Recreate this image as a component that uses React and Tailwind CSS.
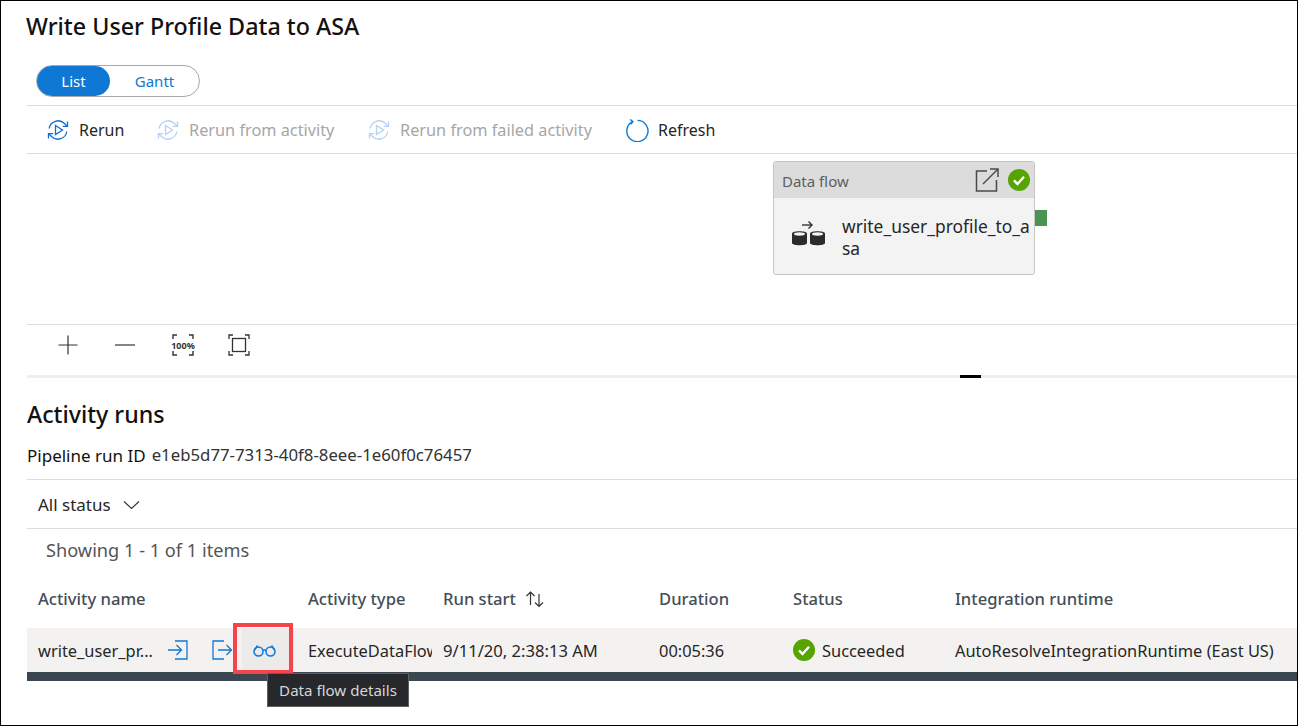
import React from 'react';

const font = { fontFamily: '"Noto Sans", "Open Sans", sans-serif' };

function RerunIcon({ muted }) {
  return (
    <svg width="24" height="24" viewBox="0 0 24 24" fill="none" stroke="#0f6cd8" strokeWidth="1.3" className={muted ? 'opacity-30' : ''}>
      <path d="M3.2 10.5A9 9 0 0 1 18.5 5.5L21 8" />
      <path d="M21.5 3.5V8.3H16.8" />
      <path d="M20.8 13.5A9 9 0 0 1 5.5 18.5L3 16" />
      <path d="M2.5 20.5V15.7H7.2" />
      <path d="M9.5 7.5L16.5 12L9.5 16.5Z" />
    </svg>
  );
}

function RefreshIcon() {
  return (
    <svg width="24" height="24" viewBox="0 0 24 24" fill="none" stroke="#0f7ad8" strokeWidth="1.4">
      <path d="M7.5 3.6A10.6 10.6 0 1 0 12.5 2.4" />
      <path d="M5.6 1.2L8 3.8L5.4 6.2" transform="rotate(-8 7 4)" />
    </svg>
  );
}

function CheckBadge({ size }) {
  return (
    <svg width={size} height={size} viewBox="0 0 22 22">
      <circle cx="11" cy="11" r="11" fill="#57a300" />
      <path d="M6 11.4L9.5 15L16 7.8" fill="none" stroke="#fff" strokeWidth="2.4" />
    </svg>
  );
}

function Tool({ icon, label, muted, className }) {
  return (
    <div className={`flex items-center gap-[9px] ${className}`}>
      {icon}
      <span className={muted ? 'translate-y-[1px] text-[16.3px] text-[#a6a6a6]' : 'text-[#262626]'}>{label}</span>
    </div>
  );
}

export default function App() {
  return (
    <div style={font} className="relative w-[1298px] h-[726px] overflow-hidden border border-black bg-white pl-[26px] text-[16px] text-[#262626]">
      {/* Header */}
      <h1 className="-ml-[1px] h-[64px] pt-[7px] text-[23.3px] leading-[36px] font-medium text-[#111] whitespace-nowrap">Write User Profile Data to ASA</h1>

      <div className="h-[40px]">
        <div className="ml-[9px] flex h-[32px] w-[164px] items-center rounded-full border border-[#a8a8a8] text-[15px]">
          <div className="flex h-[30px] w-[73px] items-center justify-center rounded-full bg-[#0f78d4] text-white">List</div>
          <div className="flex-1 text-center text-[#0f78d4]">Gantt</div>
        </div>
      </div>

      {/* Toolbar */}
      <div className="flex h-[49px] items-center border-y border-[#dedede] pl-[19px] whitespace-nowrap text-[16px]">
        <Tool className="w-[110px]" icon={<RerunIcon />} label="Rerun" />
        <Tool className="w-[211px]" muted icon={<RerunIcon muted />} label="Rerun from activity" />
        <Tool className="w-[258px]" muted icon={<RerunIcon muted />} label="Rerun from failed activity" />
        <Tool icon={<RefreshIcon />} label="Refresh" />
      </div>

      {/* Canvas */}
      <div className="relative h-[171px] border-b border-[#dedede]">
        <div className="absolute left-[746px] top-[7px] h-[114px] w-[262px] rounded-[3px] border border-[#c4c4c4] bg-[#f3f3f3]">
          <div className="flex h-[36px] items-center justify-between rounded-t-[3px] bg-[#dcdcdc] pl-[8px] pr-[4px] text-[15px] text-[#5e5e5e]">
            <span className="translate-y-[1px]">Data flow</span>
            <div className="flex items-center gap-[9px]">
              <svg width="24" height="24" viewBox="0 0 24 24" fill="none" stroke="#4a4a4a" strokeWidth="1.5">
                <path d="M12 3H1.5V23H21.500V12" />
                <path d="M8 16L23 1" />
                <path d="M15 1H23V9" />
              </svg>
              <CheckBadge size={22} />
            </div>
          </div>
          <div className="flex items-start pl-[17px] pt-[17px]">
            <svg width="35" height="26" viewBox="0 0 35 26" className="mt-[5px] shrink-0">
              <path d="M11 5H21" stroke="#262626" strokeWidth="1.3" fill="none" />
              <path d="M17.500 1.500L21 5L17.500 8.500" stroke="#262626" strokeWidth="1.3" fill="none" />
              <path d="M1 13.500C1 10.500 16 10.500 16 13.500V23C16 26 1 26 1 23Z" fill="#2b2b2b" />
              <path d="M19 13.500C19 10.500 34 10.500 34 13.500V23C34 26 19 26 19 23Z" fill="#2b2b2b" />
              <ellipse cx="8.500" cy="14" rx="5.500" ry="1.700" fill="#f3f3f3" />
              <ellipse cx="26.500" cy="14" rx="5.500" ry="1.700" fill="#f3f3f3" />
            </svg>
            <div className="ml-[16px] w-[191px] text-[17.4px] leading-[22px] break-all">write_user_profile_to_asa</div>
          </div>
          <div className="absolute -right-[13px] top-[48px] h-[16px] w-[12px] bg-[#4a9354]" />
        </div>
      </div>

      {/* Zoom controls */}
      <div className="flex h-[50px] items-center pb-[10px] pl-[30px]">
        <svg width="22" height="22" viewBox="0 0 22 22" stroke="#333" strokeWidth="1.2"><path d="M11 1.500V20.500M1.500 11H20.500" /></svg>
        <svg width="22" height="22" viewBox="0 0 22 22" stroke="#333" strokeWidth="1.2" className="ml-[35px]"><path d="M1 11H21" /></svg>
        <div className="relative ml-[36px] flex h-[22px] w-[22px] items-center justify-center">
          <svg width="22" height="22" viewBox="0 0 22 22" fill="none" stroke="#333" strokeWidth="1.4" className="absolute inset-0">
            <path d="M5 1H1V5M17 1H21V5M5 21H1V17M17 21H21V17" />
          </svg>
          <span className="text-[9px] leading-none font-bold text-[#333]">100%</span>
        </div>
        <svg width="22" height="22" viewBox="0 0 22 22" fill="none" stroke="#333" strokeWidth="1.3" className="ml-[34px]">
          <path d="M5 1H1V5M17 1H21V5M5 21H1V17M17 21H21V17" />
          <rect x="4.500" y="4.500" width="13" height="13" />
        </svg>
      </div>

      {/* Splitter */}
      <div className="relative h-[3px] bg-[#eeeeee]">
        <div className="absolute left-[933px] top-0 h-[3px] w-[21px] bg-black" />
      </div>

      {/* Activity runs */}
      <h2 className="h-[59px] pt-[18px] text-[23.2px] leading-[36px] font-medium text-[#111]">Activity runs</h2>
      <div className="flex h-[42px] items-center gap-[6px] pb-[4px] whitespace-nowrap text-[#111]">
        <span className="text-[17px]">Pipeline run ID</span>
        <span className="text-[16.8px] text-[#333] -translate-y-[1px]">e1eb5d77-7313-40f8-8eee-1e60f0c76457</span>
      </div>
      <div className="flex h-[50px] items-center gap-[12px] border-y border-[#dedede] pl-[11px] text-[17px]">
        <span className="translate-y-[1px]">All status</span>
        <svg width="17" height="10" viewBox="0 0 17 10" fill="none" stroke="#333" strokeWidth="1.1" className="translate-y-[1px]"><path d="M1 1.500L8.500 8.500L16 1.500" /></svg>
      </div>
      <div className="flex h-[46px] items-center pb-[2px] pl-[19px] text-[18.2px] text-[#555]">Showing 1 - 1 of 1 items</div>

      {/* Table */}
      <div className="grid h-[53px] grid-cols-[270px_135px_216px_134px_162px_1fr] items-center pb-[4px] pl-[11px] text-[16.6px] font-medium text-[#444e58]">
        <span>Activity name</span>
        <span>Activity type</span>
        <span className="flex items-center gap-[9px]">
          Run start
          <svg width="20" height="18" viewBox="0 0 20 18" fill="none" stroke="#333" strokeWidth="1.2">
            <path d="M5.500 15V2M1.500 6L5.500 2L9.500 6" />
            <path d="M14 4V16.500M10 12.500L14 16.500L18 12.500" />
          </svg>
        </span>
        <span>Duration</span>
        <span>Status</span>
        <span>Integration runtime</span>
      </div>
      <div className="grid h-[44px] grid-cols-[130px_140px_135px_216px_134px_162px_1fr] items-center bg-[#f3f2f1] pl-[11px] text-[16.4px] whitespace-nowrap">
        <span className="translate-y-[1px]">write_user_pr...</span>
        <div className="-ml-[1px] flex items-center">
          <svg width="21" height="20" viewBox="0 0 21 20" fill="none" stroke="#0f78d4" strokeWidth="1.300">
            <path d="M8 1H20V19H8" />
            <path d="M1 10H14M9.500 5L14.500 10L9.500 15" />
          </svg>
          <svg width="21" height="20" viewBox="0 0 21 20" fill="none" stroke="#0f78d4" strokeWidth="1.300" className="ml-[24px]">
            <path d="M12 1H1V19H12" />
            <path d="M6 10H19M14.500 5L19.500 10L14.500 15" />
          </svg>
          <div className="ml-[9px] flex h-[44px] w-[52px] shrink-0 items-center justify-center bg-[#ecebea] pr-[8px]">
            <svg width="23" height="13" viewBox="0 0 23 13" fill="none" stroke="#0f78d4" strokeWidth="1.500">
              <circle cx="5.500" cy="7.500" r="4.500" />
              <circle cx="17.500" cy="7.500" r="4.500" />
              <path d="M10 6.500Q11.500 5.500 13 6.500M1.500 6L4.500 1.500M21.500 6L18.500 1.500" />
            </svg>
          </div>
        </div>
        <span className="w-[124px] translate-y-[1px] overflow-hidden">ExecuteDataFlow</span>
        <span className="translate-y-[1px] text-[16.6px]">9/11/20, 2:38:13 AM</span>
        <span className="translate-y-[1px]">00:05:36</span>
        <span className="flex items-center gap-[7px]"><CheckBadge size={22} /><span className="translate-y-[1px]">Succeeded</span></span>
        <span className="translate-y-[1px]">AutoResolveIntegrationRuntime (East US)</span>
      </div>
      <div className="h-[9px] bg-[#3c4650]" />

      {/* Highlight over the glasses button */}
      <div className="absolute left-[232px] top-[622px] h-[51px] w-[60px] border-[4px] border-[#f5454a]" />

      {/* Tooltip */}
      <div className="absolute left-[266px] top-[672px] flex h-[34px] w-[142px] items-center justify-center border border-[#5c5f63] bg-[#26282c] text-[15.1px] text-[#d6d6d6]">
        Data flow details
      </div>
    </div>
  );
}
